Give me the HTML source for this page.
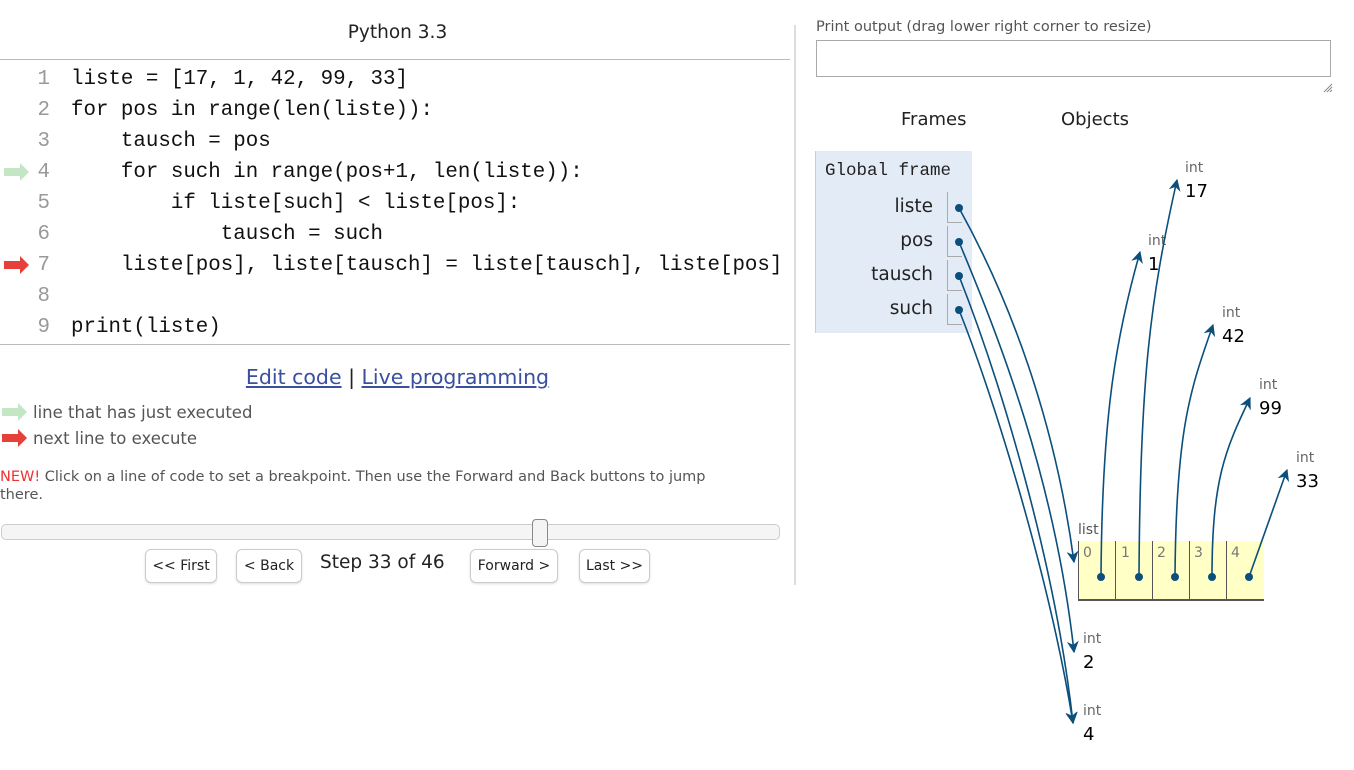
<!DOCTYPE html>
<html><head><meta charset="utf-8"><style>
body{margin:0;width:1354px;height:770px;background:#fff;position:relative;overflow:hidden;font-family:"DejaVu Sans","Liberation Sans",sans-serif;color:#222}
.a{position:absolute;white-space:nowrap}
.code{font-family:"Liberation Mono",monospace;font-size:20.8px;color:#111}
.ln{color:#999;width:50px;text-align:right;left:0}
.btn{position:absolute;top:549px;height:32px;border:1px solid #ccc;border-radius:6px;background:#fff;font-size:14px;line-height:32px;text-align:center;box-shadow:0 1px 2px #ddd;white-space:nowrap}
.int{font-size:14px;color:#666}
.val{font-size:18px;color:#000}
</style></head><body>
<div class="a" style="left:0;width:795px;top:22px;text-align:center;font-size:18.5px">Python 3.3</div>
<div class="a" style="left:0;top:59px;width:790px;height:1px;background:#bbb"></div>
<div class="a" style="left:0;top:344px;width:790px;height:1px;background:#bbb"></div>
<div class="a" style="left:794px;top:25px;width:2px;height:560px;background:#ddd"></div>

<div class="a code" style="left:0;top:64px;line-height:31px">
<div class="a ln" style="top:0">1</div><div class="a ln" style="top:31px">2</div><div class="a ln" style="top:62px">3</div><div class="a ln" style="top:93px">4</div><div class="a ln" style="top:124px">5</div><div class="a ln" style="top:155px">6</div><div class="a ln" style="top:186px">7</div><div class="a ln" style="top:217px">8</div><div class="a ln" style="top:248px">9</div>
<pre class="a" style="left:71px;top:0;margin:0;font:inherit;line-height:31px;white-space:pre">liste = [17, 1, 42, 99, 33]
for pos in range(len(liste)):
    tausch = pos
    for such in range(pos+1, len(liste)):
        if liste[such] &lt; liste[pos]:
            tausch = such
    liste[pos], liste[tausch] = liste[tausch], liste[pos]

print(liste)</pre>
</div>
<svg class="a" style="left:0;top:0" width="40" height="450">
<path d="M4 168h16v-5l9 9-9 9v-5H4z" fill="#c5e6c5"/>
<path d="M4 261h16v-5l9 9-9 9v-5H4z" fill="#e5403a"/>
<path d="M2 408h16v-5l9 9-9 9v-5H2z" fill="#c5e6c5"/>
<path d="M2 434h16v-5l9 9-9 9v-5H2z" fill="#e5403a"/>
</svg>

<div class="a" style="left:0;width:795px;top:365px;text-align:center;font-size:20.5px"><span style="color:#3a4fa0;text-decoration:underline">Edit code</span> | <span style="color:#3a4fa0;text-decoration:underline">Live programming</span></div>
<div class="a" style="left:33px;top:403px;font-size:16.5px;color:#555">line that has just executed</div>
<div class="a" style="left:33px;top:429px;font-size:16.5px;color:#555">next line to execute</div>
<div class="a" style="left:0;top:468px;font-size:14.5px;color:#555;line-height:18px"><span style="color:#e33">NEW!</span> Click on a line of code to set a breakpoint. Then use the Forward and Back buttons to jump<br>there.</div>

<div class="a" style="left:1px;top:524px;width:777px;height:14px;border:1px solid #ccc;border-radius:5px;background:#f5f5f5"></div>
<div class="a" style="left:532px;top:519px;width:14px;height:26px;border:1px solid #888;border-radius:4px;background:#f4f4f4"></div>
<div class="btn" style="left:145px;width:70px">&lt;&lt; First</div>
<div class="btn" style="left:236px;width:64px">&lt; Back</div>
<div class="a" style="left:320px;top:552px;font-size:18.5px">Step 33 of 46</div>
<div class="btn" style="left:470px;width:86px">Forward &gt;</div>
<div class="btn" style="left:579px;width:69px">Last &gt;&gt;</div>

<div class="a" style="left:816px;top:19px;font-size:14.5px;color:#555">Print output (drag lower right corner to resize)</div>
<div class="a" style="left:816px;top:40px;width:513px;height:35px;border:1px solid #aaa"></div>
<svg class="a" style="left:1322px;top:82px" width="12" height="12"><path d="M2 10L10 2M5 10L10 5M8 10L10 8" stroke="#888" stroke-width="1"/></svg>
<div class="a" style="left:901px;top:109px;font-size:18px">Frames</div>
<div class="a" style="left:1061px;top:109px;font-size:18px">Objects</div>

<div class="a" style="left:815px;top:151px;width:156px;height:182px;background:#e2ebf6;border-left:1px solid #ccc"></div>
<div class="a" style="left:825px;top:161px;font-family:'Liberation Mono',monospace;font-size:17.5px">Global frame</div>
<div class="a" style="left:800px;width:133px;text-align:right;top:196px;font-size:18.5px">liste</div>
<div class="a" style="left:800px;width:133px;text-align:right;top:230px;font-size:18.5px">pos</div>
<div class="a" style="left:800px;width:133px;text-align:right;top:264px;font-size:18.5px">tausch</div>
<div class="a" style="left:800px;width:133px;text-align:right;top:298px;font-size:18.5px">such</div>
<div class="a" style="left:947px;top:192px;width:14px;height:30px;border-left:1px solid #aaa;border-bottom:1px solid #aaa"></div>
<div class="a" style="left:947px;top:226px;width:14px;height:30px;border-left:1px solid #aaa;border-bottom:1px solid #aaa"></div>
<div class="a" style="left:947px;top:260px;width:14px;height:30px;border-left:1px solid #aaa;border-bottom:1px solid #aaa"></div>
<div class="a" style="left:947px;top:294px;width:14px;height:30px;border-left:1px solid #aaa;border-bottom:1px solid #aaa"></div>

<div class="a" style="left:1078px;top:522px;font-size:14px;color:#555">list</div>
<div class="a" style="left:1078px;top:541px;width:185px;height:58px;background:#ffffc6;border-bottom:2px solid #555;border-left:1px solid #555"></div>
<div class="a" style="left:1115px;top:541px;width:1px;height:59px;background:#555"></div>
<div class="a" style="left:1152px;top:541px;width:1px;height:59px;background:#555"></div>
<div class="a" style="left:1189px;top:541px;width:1px;height:59px;background:#555"></div>
<div class="a" style="left:1226px;top:541px;width:1px;height:59px;background:#555"></div>
<div class="a" style="left:1083px;top:545px;font-size:14px;color:#777">0</div>
<div class="a" style="left:1121px;top:545px;font-size:14px;color:#777">1</div>
<div class="a" style="left:1157px;top:545px;font-size:14px;color:#777">2</div>
<div class="a" style="left:1194px;top:545px;font-size:14px;color:#777">3</div>
<div class="a" style="left:1231px;top:545px;font-size:14px;color:#777">4</div>

<div class="a int" style="left:1185px;top:160px">int</div><div class="a val" style="left:1185px;top:181px">17</div>
<div class="a int" style="left:1148px;top:233px">int</div><div class="a val" style="left:1148px;top:254px">1</div>
<div class="a int" style="left:1222px;top:305px">int</div><div class="a val" style="left:1222px;top:326px">42</div>
<div class="a int" style="left:1259px;top:377px">int</div><div class="a val" style="left:1259px;top:398px">99</div>
<div class="a int" style="left:1296px;top:450px">int</div><div class="a val" style="left:1296px;top:471px">33</div>
<div class="a int" style="left:1083px;top:631px">int</div><div class="a val" style="left:1083px;top:652px">2</div>
<div class="a int" style="left:1083px;top:703px">int</div><div class="a val" style="left:1083px;top:724px">4</div>

<svg class="a" style="left:0;top:0" width="1354" height="770">
<defs><marker id="m" viewBox="0 0 10 10" refX="9" refY="5" markerWidth="12" markerHeight="12" markerUnits="userSpaceOnUse" orient="auto"><path d="M0 0L10 5L0 10L3 5z" fill="#0b4f7c"/></marker></defs>
<g stroke="#0b4f7c" stroke-width="1.6" fill="none" marker-end="url(#m)">
<path d="M959 208C1010 300 1055 420 1074 562"/>
<path d="M959 242C1000 340 1055 480 1074 652"/>
<path d="M959 276C1000 380 1055 560 1073 723"/>
<path d="M959 310C995 400 1050 580 1073 723"/>
<path d="M1101 577C1102 420 1115 340 1140 252"/>
<path d="M1139 577C1140 380 1150 300 1177 180"/>
<path d="M1175 577C1176 430 1190 390 1213 325"/>
<path d="M1212 577C1212 480 1225 450 1250 398"/>
<path d="M1249 577L1287 470"/>
</g>
<g fill="#0b4f7c">
<circle cx="959" cy="208" r="4"/><circle cx="959" cy="242" r="4"/><circle cx="959" cy="276" r="4"/><circle cx="959" cy="310" r="4"/>
<circle cx="1101" cy="577" r="4"/><circle cx="1139" cy="577" r="4"/><circle cx="1175" cy="577" r="4"/><circle cx="1212" cy="577" r="4"/><circle cx="1249" cy="577" r="4"/>
</g>
</svg>
</body></html>
